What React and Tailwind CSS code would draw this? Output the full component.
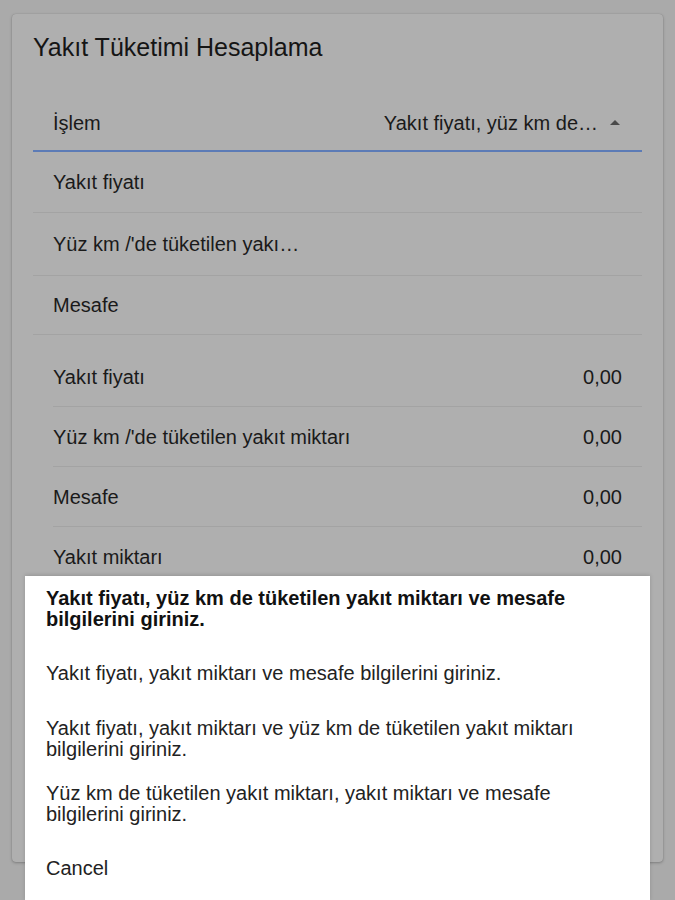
import React from "react";

export default function App() {
  const inputs = [
    { label: "Yakıt fiyatı", h: "h-[61px]" },
    { label: "Yüz km /'de tüketilen yakı…", h: "h-[63px]" },
    { label: "Mesafe", h: "h-[59px]" },
  ];

  const results = [
    { label: "Yakıt fiyatı", value: "0,00" },
    { label: "Yüz km /'de tüketilen yakıt miktarı", value: "0,00" },
    { label: "Mesafe", value: "0,00" },
    { label: "Yakıt miktarı", value: "0,00" },
    { label: "Toplam tutar", value: "0,00" },
  ];

  const options = [
    {
      text: "Yakıt fiyatı, yüz km de tüketilen yakıt miktarı ve mesafe bilgilerini giriniz.",
      bold: true,
    },
    { text: "Yakıt fiyatı, yakıt miktarı ve mesafe bilgilerini giriniz." },
    {
      text: "Yakıt fiyatı, yakıt miktarı ve yüz km de tüketilen yakıt miktarı bilgilerini giriniz.",
    },
    {
      text: "Yüz km de tüketilen yakıt miktarı, yakıt miktarı ve mesafe bilgilerini giriniz.",
    },
    { text: "Cancel" },
  ];

  return (
    <div className="relative h-[900px] w-full overflow-hidden bg-[#aaaaaa] px-[12px] pt-[14px] font-['Liberation_Sans',Arial,sans-serif] text-[#1a1a1a]">
      {/* Card (dimmed behind the sheet) */}
      <div className="h-[848px] rounded-[4px] bg-[#afafaf] px-[21px] pt-[18px] shadow-[0_1px_3px_rgba(0,0,0,0.25),0_0_1px_rgba(0,0,0,0.2)]">
        <h1 className="text-[25px] leading-[30px] text-[#151515]">
          Yakıt Tüketimi Hesaplama
        </h1>

        {/* Select */}
        <div className="mt-[33px] flex h-[57px] items-center border-b-2 border-[#5c7bb6] pl-[20px] pr-[22px] text-[20px]">
          <span className="flex-1">İşlem</span>
          <span className="whitespace-nowrap">Yakıt fiyatı, yüz km de…</span>
          <svg width="10" height="5" viewBox="0 0 10 5" className="ml-[12px]">
            <path d="M0 5 L5 0 L10 5 Z" fill="#4a4a4a" />
          </svg>
        </div>

        {/* Inputs */}
        {inputs.map((r, i) => (
          <div
            key={i}
            className={`${r.h} flex items-center border-b border-[#a3a3a3] pl-[20px] text-[20px]`}
          >
            {r.label}
          </div>
        ))}

        {/* Results */}
        <div className="ml-[20px] mt-[12px]">
          {results.map((r, i) => (
            <div
              key={i}
              className="flex h-[60px] items-center justify-between border-b border-[#a3a3a3] pr-[20px] text-[20px]"
            >
              <span>{r.label}</span>
              <span>{r.value}</span>
            </div>
          ))}
        </div>
      </div>

      {/* Bottom sheet */}
      <div className="absolute left-[25px] top-[576px] w-[625px] bg-white shadow-[0_-1px_4px_rgba(0,0,0,0.15)]">
        {options.map((o, i) => (
          <div
            key={i}
            className={`flex h-[65px] items-center px-[21px] text-[20px] leading-[21px] ${
              o.bold ? "font-bold text-[#111111]" : "text-[#222222]"
            }`}
          >
            {o.text}
          </div>
        ))}
      </div>
    </div>
  );
}
